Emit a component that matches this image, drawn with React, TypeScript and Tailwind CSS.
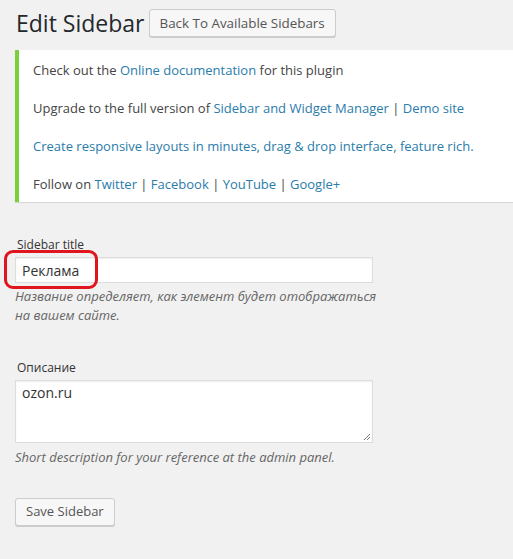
import React from "react";

const font = { fontFamily: '"Open Sans", "Noto Sans", sans-serif' };

export default function App() {
  const link = "text-[#2a7cab]";
  return (
    <div className="w-[513px] h-[559px] bg-[#f1f1f1] text-[#444] overflow-hidden relative" style={font}>
      <div className="flex items-center pt-[9px] pl-[16px] gap-[4px]">
        <h1 className="text-[23px] leading-[27px] text-[#23282d] font-normal">Edit Sidebar</h1>
        <button className="h-[28px] px-[10px] text-[13.4px] text-[#555] bg-[#f7f7f7] border border-[#cccccc] rounded-[3px] shadow-[0_1px_0_#ccc]">
          Back To Available Sidebars
        </button>
      </div>

      <div className="mt-[13px] ml-[15px] bg-white border-l-4 border-[#7ad03a] shadow-[0_1px_1px_rgba(0,0,0,0.1)] pl-[14px] pt-[10px] pb-[8px] text-[13px] text-[#444] leading-[20px] flex flex-col gap-[18px]">
        <p>
          Check out the <span className={link}>Online documentation</span> for this plugin
        </p>
        <p>
          Upgrade to the full version of <span className={link}>Sidebar and Widget Manager</span> |{" "}
          <span className={link}>Demo site</span>
        </p>
        <p className={link}>Create responsive layouts in minutes, drag &amp; drop interface, feature rich.</p>
        <p>
          Follow on <span className={link}>Twitter</span> | <span className={link}>Facebook</span> |{" "}
          <span className={link}>YouTube</span> | <span className={link}>Google+</span>
        </p>
      </div>

      <div className="pl-[15px] mt-[35px]">
        <label className="block text-[12px] leading-[16px] text-[#333] pl-[2px]">Sidebar title</label>
        <div className="relative mt-[4px] w-[358px]">
          <div className="h-[26px] bg-white border border-[#dddddd] shadow-[inset_0_1px_2px_rgba(0,0,0,0.07)] pl-[6px] flex items-center text-[14px] text-[#333]">
            Реклама
          </div>
          <div className="absolute left-[-11px] top-[-7px] w-[94px] h-[39px] border-[3px] border-[#e0161f] rounded-[9px]" />
        </div>
        <p className="mt-[4px] text-[13px] italic leading-[19px] text-[#666] w-[370px]">
          Название определяет, как элемент будет отображаться на вашем сайте.
        </p>

        <label className="block mt-[35px] text-[12px] leading-[16px] text-[#333] pl-[2px]">Описание</label>
        <div className="relative mt-[4px] w-[358px] h-[63px] bg-white border border-[#dddddd] shadow-[inset_0_1px_2px_rgba(0,0,0,0.07)] pl-[6px] pt-[2px] text-[14px] leading-[20px] text-[#333]">
          ozon.ru
          <svg className="absolute right-[1px] bottom-[1px]" width="8" height="8" viewBox="0 0 8 8">
            <line x1="1" y1="7" x2="7" y2="1" stroke="#777" strokeWidth="1" />
            <line x1="4" y1="7" x2="7" y2="4" stroke="#777" strokeWidth="1" />
          </svg>
        </div>
        <p className="mt-[5px] text-[13px] italic leading-[19px] text-[#666]">
          Short description for your reference at the admin panel.
        </p>

        <button className="mt-[31px] h-[28px] px-[10px] text-[13px] text-[#555] bg-[#f7f7f7] border border-[#cccccc] rounded-[3px] shadow-[0_1px_0_#ccc]">
          Save Sidebar
        </button>
      </div>
    </div>
  );
}
